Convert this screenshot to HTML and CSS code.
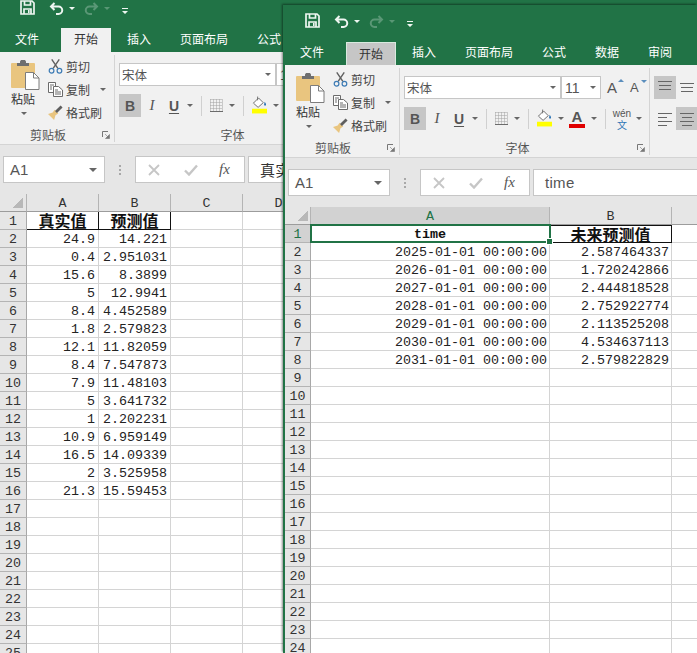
FILE: index.html
```html
<!DOCTYPE html>
<html lang="zh-CN">
<head>
  <meta charset="UTF-8">
  <meta name="viewport" content="width=device-width,initial-scale=1.0">
  <title>Excel</title>
  <link rel="stylesheet" href="styles.css">
</head>
<body>

<!-- shared icons -->
<svg class="icon-defs" aria-hidden="true">
  <symbol id="i-save" viewBox="0 0 15 15"><path d="M1 1h11l2 2v11H1zM4.5 1v4h6V1M4 14V9h7v5" fill="none" stroke="currentColor" stroke-width="1.7"/><rect x="8" y="10" width="1.6" height="3" fill="currentColor"/></symbol>
  <symbol id="i-undo" viewBox="0 0 15 13"><path d="M5.5 1 2 4.5 5.5 8M2 4.5h7.5a3.7 3.7 0 0 1 0 7.5H7" fill="none" stroke="currentColor" stroke-width="2"/></symbol>
  <symbol id="i-redo" viewBox="0 0 15 13"><path d="M9.5 1 13 4.5 9.5 8M13 4.5H5.5a3.7 3.7 0 0 0 0 7.5H8" fill="none" stroke="currentColor" stroke-width="2"/></symbol>
  <symbol id="i-more" viewBox="0 0 6 6"><path d="M0 0h6v1H0zM0 3h6L3 6z" fill="currentColor"/></symbol>
  <symbol id="i-paste" viewBox="0 0 29 30">
    <rect x="0" y="3" width="24" height="25" rx="1" fill="#e9c57f"/>
    <path d="M9 3V1.5L10 0h4l1 1.500V3h3v3H6V3z" fill="#6f6f6f"/>
    <path d="M14.500 12.500h8l5.500 5.500v11.500H14.500z" fill="#fff" stroke="#7d7d7d"/>
    <path d="M22.500 12.500V18H28" fill="none" stroke="#7d7d7d"/>
  </symbol>
  <symbol id="i-cut" viewBox="0 0 15 16">
    <path d="M5 10 11.500 .5M10 10 3.500 .5" stroke="#5f5f5f" stroke-width="1.500" fill="none"/>
    <circle cx="3.300" cy="12.500" r="2.500" fill="none" stroke="#3e7cb5" stroke-width="1.300"/>
    <circle cx="11.700" cy="12.500" r="2.500" fill="none" stroke="#3e7cb5" stroke-width="1.300"/>
  </symbol>
  <symbol id="i-copy" viewBox="0 0 15 15">
    <path d="M.5.5h7v10h-7z" fill="#fff" stroke="#6b6b6b"/>
    <path d="M2 3h4M2 5h2M2 7h2" stroke="#6b6b6b"/>
    <path d="M5.500 4.500h5l4 3.500v6.500h-9z" fill="#fff" stroke="#6b6b6b"/>
    <path d="M7 8h3M7 10h6M7 12h6" stroke="#6b6b6b"/>
  </symbol>
  <symbol id="i-brush" viewBox="0 0 16 16">
    <path d="M0 9.500 5 8l2-3 4 4-3 2-1.500 5z" fill="#e9c57f"/>
    <path d="M8.500 7.500 14.500 1.500" stroke="#5f5f5f" stroke-width="3"/>
  </symbol>
  <symbol id="i-border" viewBox="0 0 13 13">
    <path d="M.5.500h12M.5 3.500h12M.5 6.500h12M.5 9.500h12M.5.500v12M3.500.500v12M6.500.500v12M9.500.500v12M12.500.500v12" stroke="#a0a0a0" stroke-dasharray="1 1" fill="none"/>
    <path d="M0 12.500h13" stroke="#6b6b6b"/>
  </symbol>
  <symbol id="i-fill" viewBox="0 0 16 18">
    <path d="M7 1.500 1.500 7 6.500 11.500 12 6.500z" fill="#fff" stroke="#6b6b6b"/>
    <path d="M6 0v4" stroke="#6b6b6b"/>
    <path d="M13.500 5.500c1.500 2 2 3 1 4-1 .8-2-.5-1.500-1.500z" fill="#2e75b6"/>
    <rect x="0" y="13" width="16" height="5" fill="#ffff00"/>
  </symbol>
  <symbol id="i-launcher" viewBox="0 0 8 8">
    <path d="M.5 6V.5H6" fill="none" stroke="#777"/>
    <path d="M3 3l3.500 3.500M7.500 3.500v4h-4z" fill="#777" stroke="#777" stroke-width=".6"/>
  </symbol>
  <symbol id="i-align-top" viewBox="0 0 14 14"><path d="M0 .5h14M1 4.500h12M1 8.500h12" stroke="#666"/></symbol>
  <symbol id="i-align-mid" viewBox="0 0 14 14"><path d="M0 2.500h14M1 6.500h12M1 10.500h12" stroke="#666"/></symbol>
  <symbol id="i-align-left" viewBox="0 0 14 14"><path d="M0 1.500h14M0 5.500h9M0 9.500h14M0 13.500h9" stroke="#666"/></symbol>
  <symbol id="i-align-center" viewBox="0 0 14 14"><path d="M0 1.500h14M2 5.500h10M0 9.500h14M2 13.500h10" stroke="#666"/></symbol>
  <symbol id="i-cross" viewBox="0 0 12 12"><path d="M1 1l10 10M11 1 1 11" stroke="#c6c6c6" stroke-width="1.800"/></symbol>
  <symbol id="i-check" viewBox="0 0 14 12"><path d="M1 6.500 5 10.500 13 1.500" fill="none" stroke="#c6c6c6" stroke-width="2.400"/></symbol>
</svg>

<!-- back window -->
<div class="window window-back">
  <div class="titlebar">
    <svg class="qa-save"><use href="#i-save"/></svg>
    <svg class="qa-undo"><use href="#i-undo"/></svg><i class="caret caret-light"></i>
    <svg class="qa-redo qa-dim"><use href="#i-redo"/></svg><i class="caret caret-light qa-dim"></i>
    <svg class="qa-more"><use href="#i-more"/></svg>
  </div>
  <div class="tabs">
    <span class="tab tab-file">文件</span>
    <span class="tab tab-active">开始</span>
    <span class="tab">插入</span>
    <span class="tab">页面布局</span>
    <span class="tab">公式</span>
    <span class="tab">数据</span>
    <span class="tab">审阅</span>
  </div>
  <div class="ribbon">
    <div class="group group-clipboard">
      <div class="group-body clip-body">
        <div class="paste">
          <svg class="paste-icon"><use href="#i-paste"/></svg>
          <span>粘贴</span>
          <i class="caret"></i>
        </div>
        <div class="clip-list">
          <div class="clip-item"><svg><use href="#i-cut"/></svg>剪切</div>
          <div class="clip-item"><svg><use href="#i-copy"/></svg>复制<i class="caret"></i></div>
          <div class="clip-item"><svg><use href="#i-brush"/></svg>格式刷</div>
        </div>
      </div>
      <div class="group-label"><span>剪贴板</span><svg><use href="#i-launcher"/></svg></div>
    </div>
    <div class="group group-font">
      <div class="group-body">
        <div class="tool-row tool-row-top">
          <div class="combo combo-font">宋体<i class="caret"></i></div>
          <div class="combo combo-size">11<i class="caret"></i></div>
        </div>
        <div class="tool-row">
          <span class="tool tool-on tool-b">B</span><span class="tool tool-i">I</span><span class="tool tool-u">U</span><i class="caret caret-u"></i>
          <span class="tool-sep"></span>
          <div class="pair"><svg class="ic-border"><use href="#i-border"/></svg><i class="caret"></i></div>
          <span class="tool-sep"></span>
          <div class="pair"><svg class="ic-fill"><use href="#i-fill"/></svg><i class="caret"></i></div>
        </div>
      </div>
      <div class="group-label"><span>字体</span><svg><use href="#i-launcher"/></svg></div>
    </div>
  </div>
  <div class="formula-bar">
    <div class="name-box">A1<i class="caret caret-big"></i></div>
    <div class="fb-dots"><i></i><i></i><i></i></div>
    <div class="fb-buttons"><svg class="ic-cross"><use href="#i-cross"/></svg><svg class="ic-check"><use href="#i-check"/></svg><span class="fx">fx</span></div>
    <div class="fb-input fb-cjk">真实值</div>
  </div>
  <div class="sheet">
    <table class="grid grid-back">
      <colgroup><col class="col-head"><col class="col-72"><col class="col-72"><col class="col-72"><col class="col-72"></colgroup>
      <tr class="head"><th class="corner"></th><th>A</th><th>B</th><th>C</th><th>D</th></tr>
      <tr><th>1</th><td class="title-cell">真实值</td><td class="title-cell">预测值</td><td></td><td></td></tr>
      <tr><th>2</th><td>24.9</td><td>14.221</td><td></td><td></td></tr>
      <tr><th>3</th><td>0.4</td><td>2.951031</td><td></td><td></td></tr>
      <tr><th>4</th><td>15.6</td><td>8.3899</td><td></td><td></td></tr>
      <tr><th>5</th><td>5</td><td>12.9941</td><td></td><td></td></tr>
      <tr><th>6</th><td>8.4</td><td>4.452589</td><td></td><td></td></tr>
      <tr><th>7</th><td>1.8</td><td>2.579823</td><td></td><td></td></tr>
      <tr><th>8</th><td>12.1</td><td>11.82059</td><td></td><td></td></tr>
      <tr><th>9</th><td>8.4</td><td>7.547873</td><td></td><td></td></tr>
      <tr><th>10</th><td>7.9</td><td>11.48103</td><td></td><td></td></tr>
      <tr><th>11</th><td>5</td><td>3.641732</td><td></td><td></td></tr>
      <tr><th>12</th><td>1</td><td>2.202231</td><td></td><td></td></tr>
      <tr><th>13</th><td>10.9</td><td>6.959149</td><td></td><td></td></tr>
      <tr><th>14</th><td>16.5</td><td>14.09339</td><td></td><td></td></tr>
      <tr><th>15</th><td>2</td><td>3.525958</td><td></td><td></td></tr>
      <tr><th>16</th><td>21.3</td><td>15.59453</td><td></td><td></td></tr>
      <tr><th>17</th><td></td><td></td><td></td><td></td></tr>
      <tr><th>18</th><td></td><td></td><td></td><td></td></tr>
      <tr><th>19</th><td></td><td></td><td></td><td></td></tr>
      <tr><th>20</th><td></td><td></td><td></td><td></td></tr>
      <tr><th>21</th><td></td><td></td><td></td><td></td></tr>
      <tr><th>22</th><td></td><td></td><td></td><td></td></tr>
      <tr><th>23</th><td></td><td></td><td></td><td></td></tr>
      <tr><th>24</th><td></td><td></td><td></td><td></td></tr>
      <tr><th>25</th><td></td><td></td><td></td><td></td></tr>
    </table>
  </div>
</div>

<!-- front window -->
<div class="window window-front">
  <div class="titlebar">
    <svg class="qa-save"><use href="#i-save"/></svg>
    <svg class="qa-undo"><use href="#i-undo"/></svg><i class="caret caret-light"></i>
    <svg class="qa-redo qa-dim"><use href="#i-redo"/></svg><i class="caret caret-light qa-dim"></i>
    <svg class="qa-more"><use href="#i-more"/></svg>
  </div>
  <div class="tabs">
    <span class="tab tab-file">文件</span>
    <span class="tab tab-active tab-grey">开始</span>
    <span class="tab">插入</span>
    <span class="tab">页面布局</span>
    <span class="tab">公式</span>
    <span class="tab">数据</span>
    <span class="tab">审阅</span>
  </div>
  <div class="ribbon">
    <div class="group group-clipboard">
      <div class="group-body clip-body">
        <div class="paste">
          <svg class="paste-icon"><use href="#i-paste"/></svg>
          <span>粘贴</span>
          <i class="caret"></i>
        </div>
        <div class="clip-list">
          <div class="clip-item"><svg><use href="#i-cut"/></svg>剪切</div>
          <div class="clip-item"><svg><use href="#i-copy"/></svg>复制<i class="caret"></i></div>
          <div class="clip-item"><svg><use href="#i-brush"/></svg>格式刷</div>
        </div>
      </div>
      <div class="group-label"><span>剪贴板</span><svg><use href="#i-launcher"/></svg></div>
    </div>
    <div class="group group-font">
      <div class="group-body">
        <div class="tool-row tool-row-top">
          <div class="combo combo-font">宋体<i class="caret"></i></div>
          <div class="combo combo-size">11<i class="caret"></i></div>
          <span class="grow grow-up">A</span>
          <span class="grow grow-down">A</span>
        </div>
        <div class="tool-row">
          <span class="tool tool-on tool-b">B</span><span class="tool tool-i">I</span><span class="tool tool-u">U</span><i class="caret caret-u"></i>
          <span class="tool-sep"></span>
          <div class="pair"><svg class="ic-border"><use href="#i-border"/></svg><i class="caret"></i></div>
          <span class="tool-sep"></span>
          <div class="pair"><svg class="ic-fill"><use href="#i-fill"/></svg><i class="caret"></i></div>
          <div class="pair pair-color"><span class="font-color">A</span><i class="caret"></i></div>
          <span class="tool-sep"></span>
          <div class="pair"><span class="wen"><b>wén</b><em>文</em></span><i class="caret"></i></div>
        </div>
      </div>
      <div class="group-label"><span>字体</span><svg><use href="#i-launcher"/></svg></div>
    </div>
    <div class="group group-align">
      <div class="align-row">
        <span class="align-btn align-on"><svg><use href="#i-align-top"/></svg></span>
        <span class="align-btn"><svg><use href="#i-align-mid"/></svg></span>
      </div>
      <div class="align-row">
        <span class="align-btn"><svg><use href="#i-align-left"/></svg></span>
        <span class="align-btn align-on"><svg><use href="#i-align-center"/></svg></span>
      </div>
    </div>
  </div>
  <div class="formula-bar">
    <div class="name-box">A1<i class="caret caret-big"></i></div>
    <div class="fb-dots"><i></i><i></i><i></i></div>
    <div class="fb-buttons"><svg class="ic-cross"><use href="#i-cross"/></svg><svg class="ic-check"><use href="#i-check"/></svg><span class="fx">fx</span></div>
    <div class="fb-input">time</div>
  </div>
  <div class="sheet">
    <table class="grid grid-front">
      <colgroup><col class="col-head-front"><col class="col-time"><col class="col-pred"><col class="col-72"></colgroup>
      <tr class="head"><th class="corner"></th><th class="hl">A</th><th>B</th><th></th></tr>
      <tr><th class="hl">1</th><td class="selected">time</td><td class="title-cell title-last">未来预测值</td><td></td></tr>
      <tr><th>2</th><td>2025-01-01 00:00:00</td><td>2.587464337</td><td></td></tr>
      <tr><th>3</th><td>2026-01-01 00:00:00</td><td>1.720242866</td><td></td></tr>
      <tr><th>4</th><td>2027-01-01 00:00:00</td><td>2.444818528</td><td></td></tr>
      <tr><th>5</th><td>2028-01-01 00:00:00</td><td>2.752922774</td><td></td></tr>
      <tr><th>6</th><td>2029-01-01 00:00:00</td><td>2.113525208</td><td></td></tr>
      <tr><th>7</th><td>2030-01-01 00:00:00</td><td>4.534637113</td><td></td></tr>
      <tr><th>8</th><td>2031-01-01 00:00:00</td><td>2.579822829</td><td></td></tr>
      <tr><th>9</th><td></td><td></td><td></td></tr>
      <tr><th>10</th><td></td><td></td><td></td></tr>
      <tr><th>11</th><td></td><td></td><td></td></tr>
      <tr><th>12</th><td></td><td></td><td></td></tr>
      <tr><th>13</th><td></td><td></td><td></td></tr>
      <tr><th>14</th><td></td><td></td><td></td></tr>
      <tr><th>15</th><td></td><td></td><td></td></tr>
      <tr><th>16</th><td></td><td></td><td></td></tr>
      <tr><th>17</th><td></td><td></td><td></td></tr>
      <tr><th>18</th><td></td><td></td><td></td></tr>
      <tr><th>19</th><td></td><td></td><td></td></tr>
      <tr><th>20</th><td></td><td></td><td></td></tr>
      <tr><th>21</th><td></td><td></td><td></td></tr>
      <tr><th>22</th><td></td><td></td><td></td></tr>
      <tr><th>23</th><td></td><td></td><td></td></tr>
      <tr><th>24</th><td></td><td></td><td></td></tr>
    </table>
  </div>
</div>

</body>
</html>
```

FILE: styles.css
```css
html, body { margin:0; padding:0; height:100%; overflow:hidden; background:#fff; }
body { position:relative; font-family:"Noto Sans CJK SC", "Liberation Sans", sans-serif; font-size:12px; color:#444; }
.icon-defs { position:absolute; width:0; height:0; }

/* Windows sit on a free desktop */
.window { position:absolute; background:#fff; overflow:hidden; }
.window-back { left:0; top:-8px; width:697px; height:661px; }
.window-front { left:283px; top:5px; width:412px; height:648px; border-left:2px solid #217346; box-shadow:-1px -1px 2px rgba(0,0,0,.45); }

/* Title bar */
.titlebar { height:36px; background:#217346; color:#eef6f1; display:flex; align-items:flex-start; padding:8px 0 0 20px; box-sizing:border-box; }
.qa-save { width:15px; height:15px; flex:none; }
.qa-undo { width:15px; height:13px; margin:2px 0 0 14px; flex:none; }
.qa-redo { width:15px; height:13px; margin:2px 0 0 9px; flex:none; }
.qa-dim { opacity:.28; }
.qa-more { width:6px; height:6px; margin:8px 0 0 12px; flex:none; }

.caret { display:inline-block; width:0; height:0; border-left:3px solid transparent; border-right:3px solid transparent; border-top:3px solid #666; flex:none; }
.caret-light { border-top-color:#eef6f1; margin:7px 0 0 5px; }
.caret-big { border-left-width:4px; border-right-width:4px; border-top-width:4px; }

/* Tabs */
.tabs { height:24px; background:#217346; display:flex; gap:3px; padding-left:2px; color:#fff; line-height:22px; box-sizing:border-box; }
.tab { padding:0 13px; white-space:nowrap; }
.tab-file { margin-right:6px; }
.tab-active { background:#f1f1f1; color:#333; }
.tab-grey { background:#c6c6c6; border:1px solid #d9eadf; border-bottom:0; padding:0 12px 0 12px; line-height:21px; margin-top:1px; }

/* Ribbon */
.ribbon { height:93px; background:#f1f1f1; border-bottom:1px solid #d4d4d4; box-sizing:border-box; display:flex; padding-top:3px; }
.group { height:87px; border-right:1px solid #d4d4d4; display:flex; flex-direction:column; flex:none; box-sizing:border-box; }
.group-body { height:73px; }
.group-label { height:14px; display:flex; align-items:center; line-height:14px; color:#555; }
.group-label span { flex:1; text-align:center; }
.group-label svg { width:8px; height:8px; margin:0 4px 0 6px; }

.group-clipboard { width:115px; }
.clip-body { display:flex; }
.paste { width:48px; padding:5px 0 0 11px; box-sizing:border-box; display:flex; flex-direction:column; align-items:flex-start; line-height:14px; color:#333; }
.paste-icon { width:29px; height:30px; }
.paste span { margin:2px 0 0 0; }
.paste .caret { margin:6px 0 0 10px; }
.clip-item { height:23px; display:flex; align-items:center; color:#444; white-space:nowrap; }
.clip-item svg { width:15px; height:15px; margin-right:3px; flex:none; }
.clip-item .caret { margin-left:10px; }

.group-font { width:250px; padding-left:4px; }
.tool-row { display:flex; align-items:center; height:23px; margin-top:8px; }
.combo { height:23px; box-sizing:border-box; background:#fff; border:1px solid #c6c6c6; display:flex; align-items:center; justify-content:space-between; padding:0 4px 0 2px; color:#555; flex:none; font-size:12.5px; }
.combo-font { width:157px; }
.combo-size { width:40px; font-family:"Liberation Sans", sans-serif; font-size:14px; padding-left:3px; }
.grow { position:relative; width:13px; font:15px "Liberation Sans", sans-serif; color:#555; margin-left:6px; }
.grow-down { font-size:13px; margin-left:10px; }
.grow::after { content:""; position:absolute; top:0; right:-4px; border-left:3px solid transparent; border-right:3px solid transparent; }
.grow-up::after { border-bottom:3px solid #5b8ebd; }
.grow-down::after { border-top:3px solid #5b8ebd; }

.tool { width:22px; height:23px; display:flex; align-items:center; justify-content:center; font:bold 14px "Liberation Sans", sans-serif; color:#555; flex:none; }
.tool-on { background:#c6c6c6; }
.tool-i { font:italic 15px "Liberation Serif", serif; }
.tool-u { text-decoration:underline; text-underline-offset:2px; }
.caret-u { margin-left:2px; }
.tool-sep { width:1px; height:20px; background:#d0d0d0; margin:0 8px; flex:none; }
.pair { display:flex; align-items:center; gap:6px; flex:none; }
.pair-color { margin-left:5px; }
.ic-border { width:13px; height:13px; }
.ic-fill { width:15px; height:18px; margin-top:-2px; }
.font-color { width:16px; height:18px; box-sizing:border-box; border-bottom:4px solid #e00000; font:bold 15px/14px "Liberation Sans", sans-serif; color:#555; text-align:center; }
.wen { width:16px; display:flex; flex-direction:column; align-items:center; line-height:11px; }
.wen b { font:10px/11px "Liberation Sans", sans-serif; color:#555; }
.wen em { font:normal 10px/11px "Noto Sans CJK SC", sans-serif; color:#2e75b6; }

.group-align { width:60px; border-right:0; padding-left:4px; }
.align-row { display:flex; height:23px; margin-top:8px; }
.align-btn { width:22px; height:23px; display:flex; align-items:center; justify-content:center; flex:none; }
.align-btn svg { width:14px; height:14px; }
.align-on { background:#c6c6c6; }

/* Formula bar */
.formula-bar { height:49px; background:#e6e6e6; box-sizing:border-box; display:flex; align-items:flex-start; padding:11px 0 0 3px; }
.name-box, .fb-buttons, .fb-input { height:27px; box-sizing:border-box; background:#fff; border:1px solid #c6c6c6; display:flex; align-items:center; font:15px "Liberation Sans", sans-serif; color:#555; flex:none; }
.name-box { width:102px; justify-content:space-between; padding:0 7px 0 6px; }
.fb-dots { width:30px; height:27px; display:flex; flex-direction:column; align-items:center; justify-content:center; gap:2px; flex:none; }
.fb-dots i { width:2px; height:2px; background:#a8a8a8; }
.fb-buttons { width:110px; padding-left:12px; }
.ic-cross { width:12px; height:12px; }
.ic-check { width:14px; height:12px; margin-left:24px; }
.fx { font:italic 15px "Liberation Serif", serif; color:#555; margin-left:21px; }
.fb-input { width:300px; margin-left:3px; padding-left:11px; white-space:nowrap; letter-spacing:.3px; }
.fb-cjk { font:15px "Noto Sans CJK SC", sans-serif; color:#333; }

/* Sheet */
.grid { table-layout:fixed; border-spacing:0; border-collapse:separate; font:13.33px/14px "Liberation Mono", "Noto Sans CJK SC", monospace; color:#222; }
.grid-back { width:315px; }
.grid-front { width:459px; }
.col-head { width:27px; }
.col-head-front { width:26px; }
.col-72 { width:72px; }
.col-time { width:239px; }
.col-pred { width:122px; }
.grid tr { height:18px; }
.grid th, .grid td { height:18px; box-sizing:border-box; white-space:nowrap; overflow:hidden; }
.grid th { background:#e6e6e6; font-weight:normal; color:#333; text-align:center; padding:2px 0 0; line-height:15px; border-right:1px solid #a8a8a8; border-bottom:1px solid #b4b4b4; }
.head th { border-right:1px solid #b4b4b4; border-bottom:1px solid #9c9c9c; }
.corner { background:linear-gradient(135deg, transparent 50%, #b8b8b8 50%) no-repeat 13px 3px / 10px 11px #e6e6e6 !important; }
.grid th.hl { background:#d2d2d2; color:#217346; }
.grid td { text-align:right; padding:3px 3px 0 0; border-right:1px solid #d4d4d4; border-bottom:1px solid #d4d4d4; }
.grid-front td { padding-right:2px; }

.grid .title-cell { font:bold 16px/15px "Noto Sans CJK SC", sans-serif; text-align:center; padding:0; color:#111; overflow:visible; border-right:1px solid #111; border-bottom:1px solid #111; }
.grid .title-last { border-top:1px solid #111; line-height:14px; }

/* Selected cell, drawn over the grid */
.grid .selected { position:relative; overflow:visible; text-align:center; font-weight:bold; color:#111; padding:3px 0 0; }
.selected::after { content:""; position:absolute; left:-1px; right:-2px; top:-1px; bottom:-1px; border:2px solid #217346; }
.selected::before { content:""; position:absolute; right:-4px; bottom:-3px; width:5px; height:5px; background:#217346; border:1px solid #fff; z-index:1; }
```
